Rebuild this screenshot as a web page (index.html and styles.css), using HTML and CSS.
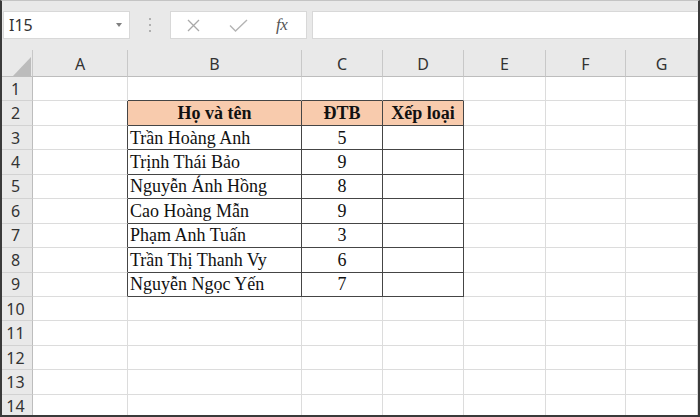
FILE: index.html
```html
<!DOCTYPE html>
<html lang="vi">
<head>
<meta charset="utf-8">
<title>Bảng điểm</title>
<link rel="stylesheet" href="styles.css">
</head>
<body>
<div class="frame">
  <div class="fbar">
    <div class="namebox"><span>I15</span><span class="caret"></span></div>
    <div class="dots"><span></span><span></span><span></span></div>
    <div class="fxbox">
      <svg class="ico-x" width="13" height="13" viewBox="0 0 13 13"><path d="M1 1 L12 12 M12 1 L1 12" stroke="#a9a9a9" stroke-width="1.3" fill="none"/></svg>
      <svg class="ico-ok" width="19" height="13" viewBox="0 0 19 13"><path d="M1 6.5 L6.5 12 L18 1" stroke="#b4b4b4" stroke-width="1.4" fill="none"/></svg>
      <span class="fx">fx</span>
    </div>
    <div class="formula"></div>
  </div>
  <div class="grid">
    <div class="c ch corner"><svg width="18" height="19" viewBox="0 0 18 19"><polygon points="18,0 18,19 0,19" fill="#bcbcbc"/></svg></div>
    <div class="c ch">A</div><div class="c ch">B</div><div class="c ch">C</div><div class="c ch">D</div><div class="c ch">E</div><div class="c ch">F</div><div class="c ch">G</div>

    <div class="c rh">1</div><div class="c"></div><div class="c db"></div><div class="c db"></div><div class="c db"></div><div class="c"></div><div class="c"></div><div class="c"></div>

    <div class="c rh">2</div><div class="c dr"></div><div class="c dr db t hd">Họ và tên</div><div class="c dr db t hd">ĐTB</div><div class="c dr db t hd">Xếp loại</div><div class="c"></div><div class="c"></div><div class="c"></div>

    <div class="c rh">3</div><div class="c dr"></div><div class="c dr db t nm">Trần Hoàng Anh</div><div class="c dr db t nu">5</div><div class="c dr db"></div><div class="c"></div><div class="c"></div><div class="c"></div>

    <div class="c rh">4</div><div class="c dr"></div><div class="c dr db t nm">Trịnh Thái Bảo</div><div class="c dr db t nu">9</div><div class="c dr db"></div><div class="c"></div><div class="c"></div><div class="c"></div>

    <div class="c rh">5</div><div class="c dr"></div><div class="c dr db t nm">Nguyễn Ánh Hồng</div><div class="c dr db t nu">8</div><div class="c dr db"></div><div class="c"></div><div class="c"></div><div class="c"></div>

    <div class="c rh">6</div><div class="c dr"></div><div class="c dr db t nm">Cao Hoàng Mẫn</div><div class="c dr db t nu">9</div><div class="c dr db"></div><div class="c"></div><div class="c"></div><div class="c"></div>

    <div class="c rh">7</div><div class="c dr"></div><div class="c dr db t nm">Phạm Anh Tuấn</div><div class="c dr db t nu">3</div><div class="c dr db"></div><div class="c"></div><div class="c"></div><div class="c"></div>

    <div class="c rh">8</div><div class="c dr"></div><div class="c dr db t nm">Trần Thị Thanh Vy</div><div class="c dr db t nu">6</div><div class="c dr db"></div><div class="c"></div><div class="c"></div><div class="c"></div>

    <div class="c rh">9</div><div class="c dr"></div><div class="c dr db t nm">Nguyễn Ngọc Yến</div><div class="c dr db t nu">7</div><div class="c dr db"></div><div class="c"></div><div class="c"></div><div class="c"></div>

    <div class="c rh">10</div><div class="c"></div><div class="c"></div><div class="c"></div><div class="c"></div><div class="c"></div><div class="c"></div><div class="c"></div>
    <div class="c rh">11</div><div class="c"></div><div class="c"></div><div class="c"></div><div class="c"></div><div class="c"></div><div class="c"></div><div class="c"></div>
    <div class="c rh">12</div><div class="c"></div><div class="c"></div><div class="c"></div><div class="c"></div><div class="c"></div><div class="c"></div><div class="c"></div>
    <div class="c rh">13</div><div class="c"></div><div class="c"></div><div class="c"></div><div class="c"></div><div class="c"></div><div class="c"></div><div class="c"></div>
    <div class="c rh">14</div><div class="c"></div><div class="c"></div><div class="c"></div><div class="c"></div><div class="c"></div><div class="c"></div><div class="c"></div>
  </div>
</div>
</body>
</html>
```
FILE: styles.css
```css
* { box-sizing: border-box; }
html, body { margin: 0; padding: 0; background: #fff; }
body {
  width: 700px;
  height: 417px;
  overflow: hidden;
  font-family: "Noto Sans", "Open Sans", sans-serif;
}
.frame {
  width: 700px;
  height: 417px;
  border: 2px solid #3a3a3a;
  border-top: 1px solid #c4c4c4;
  background: #e9e9e9;
  display: flex;
  flex-direction: column;
  overflow: hidden;
}
.fbar {
  height: 49px;
  flex: none;
  display: flex;
  align-items: flex-start;
  padding-top: 10px;
  padding-left: 1px;
}
.namebox {
  width: 127px;
  height: 28px;
  background: #fff;
  border: 1px solid #d8d8d8;
  display: flex;
  align-items: center;
  justify-content: space-between;
  padding: 0 7px 0 5px;
  font-size: 16px;
  color: #333;
}
.caret {
  width: 0;
  height: 0;
  border-left: 3.5px solid transparent;
  border-right: 3.5px solid transparent;
  border-top: 4px solid #808080;
}
.dots {
  width: 40px;
  height: 28px;
  display: flex;
  flex-direction: column;
  align-items: center;
  justify-content: center;
  gap: 4px;
}
.dots span {
  width: 2px;
  height: 2px;
  background: #b0b0b0;
}
.fxbox {
  width: 137px;
  height: 28px;
  background: #fff;
  border: 1px solid #d8d8d8;
  display: flex;
  align-items: center;
  padding-left: 16px;
}
.ico-ok { margin-left: 29px; }
.fx {
  margin-left: 28px;
  font-family: "Liberation Serif", serif;
  font-style: italic;
  font-size: 17px;
  color: #555;
  letter-spacing: -0.5px;
}
.formula {
  flex: 1;
  margin-left: 5px;
  height: 28px;
  background: #fff;
  border: 1px solid #d8d8d8;
  border-right: none;
}
.grid {
  flex: 1;
  display: grid;
  grid-template-columns: 31px 95px 174px 81px 81px 82px 80px 1fr;
  grid-template-rows: 27px repeat(14, 24.44px);
  background: #fff;
  overflow: hidden;
}
.c {
  border-right: 1px solid #dcdcdc;
  border-bottom: 1px solid #dcdcdc;
  min-width: 0;
}
.ch {
  background: #e9e9e9;
  border-right-color: #c8c8c8;
  border-bottom-color: #bdbdbd;
  display: flex;
  align-items: center;
  justify-content: center;
  font-size: 16px;
  color: #333;
  padding-top: 1px;
}
.corner {
  justify-content: flex-end;
  align-items: flex-end;
  padding: 0 1px 0 0;
}
.corner svg { display: block; }
.rh {
  background: #e9e9e9;
  border-right-color: #bdbdbd;
  border-bottom-color: #d2d2d2;
  display: flex;
  align-items: center;
  justify-content: center;
  padding-right: 3px;
  font-size: 16px;
  color: #333;
}
.dr { border-right-color: #454545; }
.db { border-bottom-color: #454545; }
.t {
  font-family: "Liberation Serif", "Times New Roman", serif;
  font-size: 18px;
  line-height: 1;
  color: #111;
  display: flex;
  align-items: center;
  white-space: nowrap;
}
.nm { padding-left: 2px; }
.nu { justify-content: center; }
.hd {
  background: #f8cbad;
  font-weight: bold;
  justify-content: center;
}
```
